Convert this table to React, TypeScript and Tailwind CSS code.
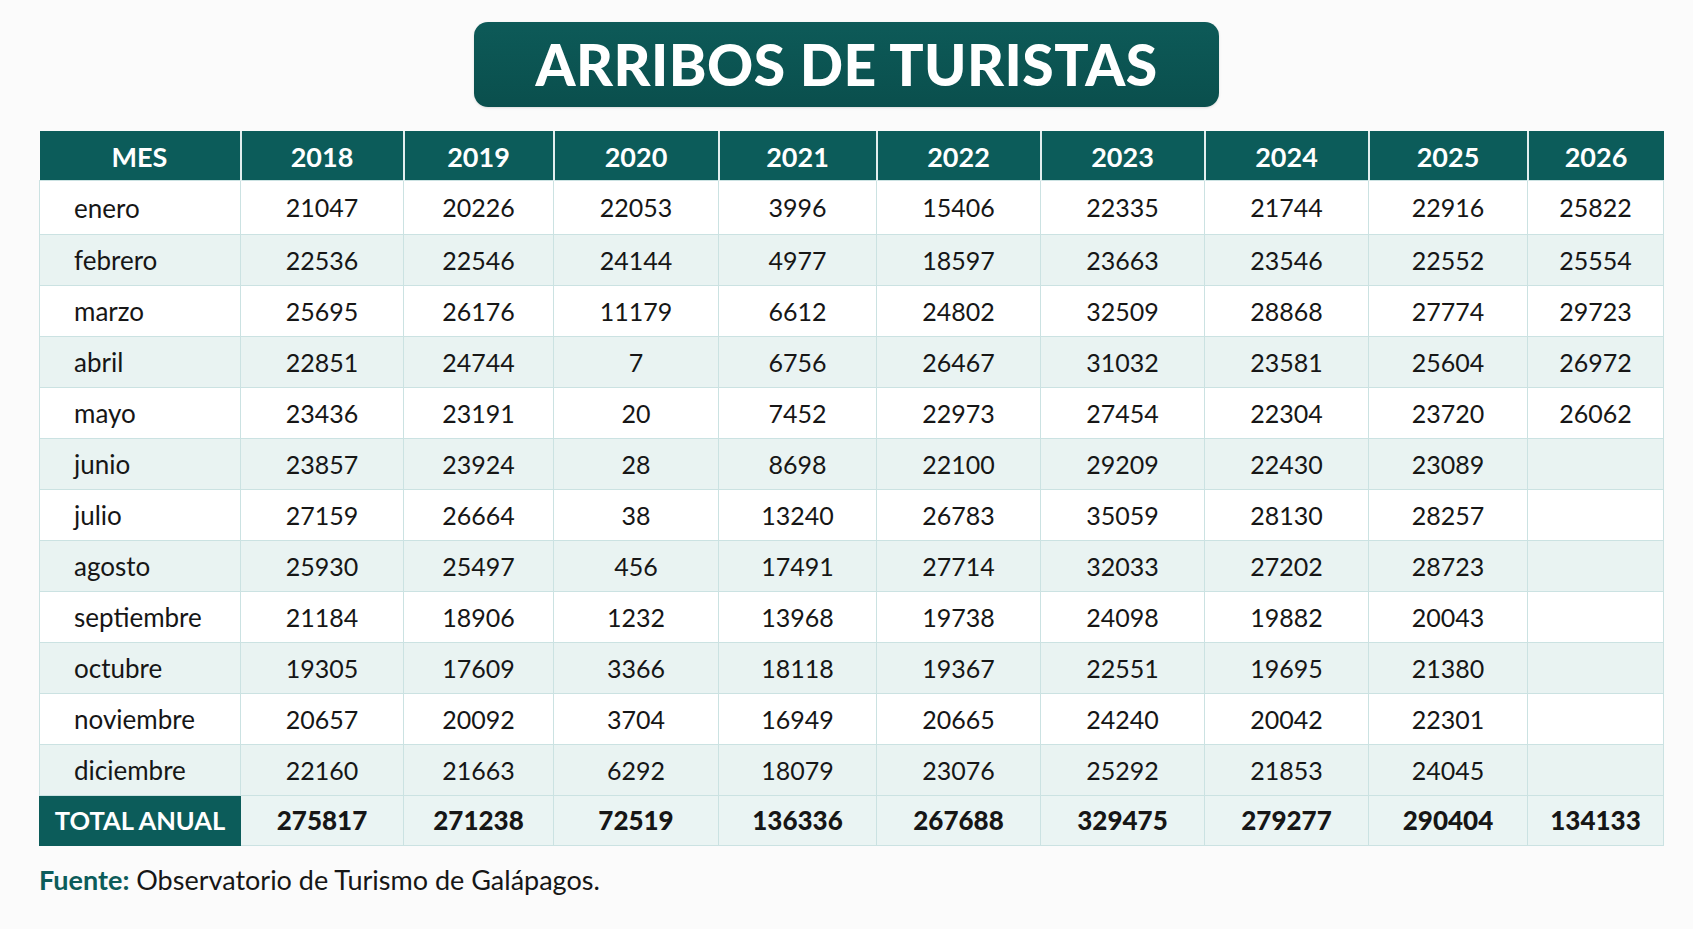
const years = ['2018', '2019', '2020', '2021', '2022', '2023', '2024', '2025', '2026']
const colWidths = ['w-[201px]', 'w-[163px]', 'w-[150px]', 'w-[165px]', 'w-[158px]', 'w-[164px]', 'w-[164px]', 'w-[164px]', 'w-[159px]', 'w-[136px]']

const rows: [string, string[]][] = [
  ['enero', ['21047', '20226', '22053', '3996', '15406', '22335', '21744', '22916', '25822']],
  ['febrero', ['22536', '22546', '24144', '4977', '18597', '23663', '23546', '22552', '25554']],
  ['marzo', ['25695', '26176', '11179', '6612', '24802', '32509', '28868', '27774', '29723']],
  ['abril', ['22851', '24744', '7', '6756', '26467', '31032', '23581', '25604', '26972']],
  ['mayo', ['23436', '23191', '20', '7452', '22973', '27454', '22304', '23720', '26062']],
  ['junio', ['23857', '23924', '28', '8698', '22100', '29209', '22430', '23089', '']],
  ['julio', ['27159', '26664', '38', '13240', '26783', '35059', '28130', '28257', '']],
  ['agosto', ['25930', '25497', '456', '17491', '27714', '32033', '27202', '28723', '']],
  ['septiembre', ['21184', '18906', '1232', '13968', '19738', '24098', '19882', '20043', '']],
  ['octubre', ['19305', '17609', '3366', '18118', '19367', '22551', '19695', '21380', '']],
  ['noviembre', ['20657', '20092', '3704', '16949', '20665', '24240', '20042', '22301', '']],
  ['diciembre', ['22160', '21663', '6292', '18079', '23076', '25292', '21853', '24045', '']],
]

const totals = ['275817', '271238', '72519', '136336', '267688', '329475', '279277', '290404', '134133']

export default function App() {
  return (
    <div className="w-[1693px] h-[929px] bg-[#fbfbfb] text-[#161616] font-['Lato',sans-serif] overflow-hidden">
      <div className="pt-[22px] flex justify-center">
        <div className="w-[745px] h-[85px] rounded-[14px] bg-gradient-to-b from-[#0d5a58] to-[#0a4f4d] flex items-center justify-center shadow-sm">
          <h1 className="text-white text-[57px] font-black tracking-[0.5px] leading-none">ARRIBOS DE TURISTAS</h1>
        </div>
      </div>

      <div className="ml-[39px] mt-[24px] w-[1624px]">
        <table className="table-fixed border-collapse w-full">
          <colgroup>
            {colWidths.map((w, i) => (
              <col key={i} className={w} />
            ))}
          </colgroup>
          <thead>
            <tr className="h-[49px] bg-[#0c5c5a] text-white">
              <th className="text-[27px] font-bold pt-[3px] border-r-2 border-[#e3eeee]">MES</th>
              {years.map((y, i) => (
                <th key={y} className={`text-[27px] font-bold pt-[3px] ${i < years.length - 1 ? 'border-r-2 border-[#e3eeee]' : ''}`}>
                  {y}
                </th>
              ))}
            </tr>
          </thead>
          <tbody>
            {rows.map(([month, vals], r) => (
              <tr key={month} className={`${r === 0 ? 'h-[54px]' : 'h-[51px]'} ${r % 2 === 1 ? 'bg-[#e9f3f2]' : 'bg-white'}`}>
                <td className="pl-[34px] pt-[2px] text-[26px] border border-[#cbe2e2]">{month}</td>
                {vals.map((v, i) => (
                  <td key={i} className="text-center pt-[2px] text-[25px] border border-[#cbe2e2]">
                    {v}
                  </td>
                ))}
              </tr>
            ))}
            <tr className="h-[50px] bg-[#eaf4f3]">
              <td className="bg-[#0c5c5a] text-white text-center text-[25.5px] font-bold border border-[#0c5c5a]">TOTAL ANUAL</td>
              {totals.map((t, i) => (
                <td key={i} className="text-center text-[26px] font-black border border-[#cbe2e2]">
                  {t}
                </td>
              ))}
            </tr>
          </tbody>
        </table>
      </div>

      <p className="ml-[39px] mt-[14px] text-[27px]">
        <span className="font-bold text-[#0c5c5a]">Fuente:</span> Observatorio de Turismo de Galápagos.
      </p>
    </div>
  )
}
